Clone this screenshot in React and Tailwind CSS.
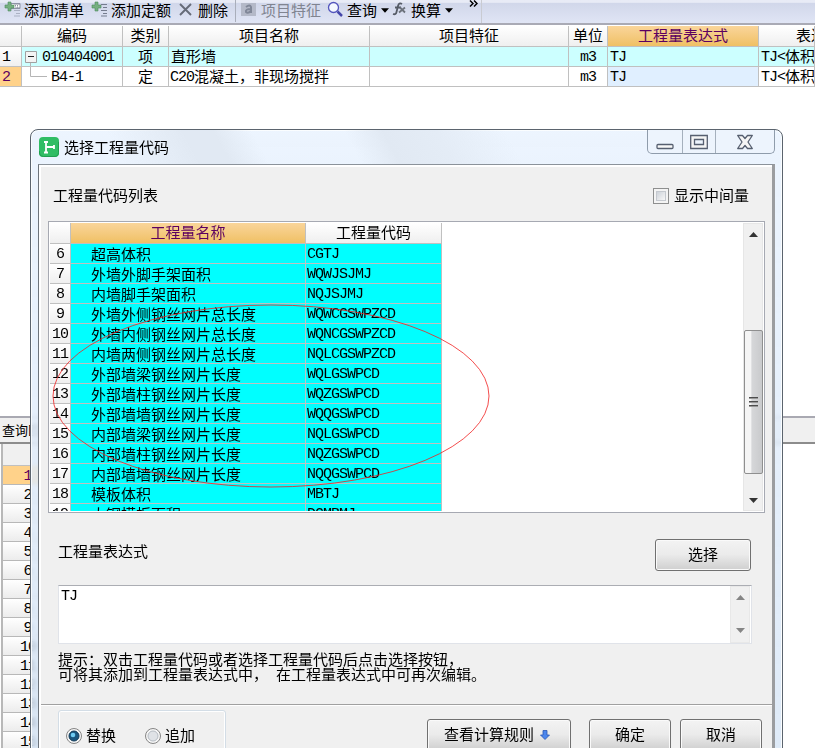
import { clsx } from "clsx";

const codes = [
  [6, "超高体积", "CGTJ"],
  [7, "外墙外脚手架面积", "WQWJSJMJ"],
  [8, "内墙脚手架面积", "NQJSJMJ"],
  [9, "外墙外侧钢丝网片总长度", "WQWCGSWPZCD"],
  [10, "外墙内侧钢丝网片总长度", "WQNCGSWPZCD"],
  [11, "内墙两侧钢丝网片总长度", "NQLCGSWPZCD"],
  [12, "外部墙梁钢丝网片长度", "WQLGSWPCD"],
  [13, "外部墙柱钢丝网片长度", "WQZGSWPCD"],
  [14, "外部墙墙钢丝网片长度", "WQQGSWPCD"],
  [15, "内部墙梁钢丝网片长度", "NQLGSWPCD"],
  [16, "内部墙柱钢丝网片长度", "NQZGSWPCD"],
  [17, "内部墙墙钢丝网片长度", "NQQGSWPCD"],
  [18, "模板体积", "MBTJ"],
  [19, "大钢模板面积", "DGMBMJ"],
];

const mainCols = "grid grid-cols-[22px_101px_46px_201px_199px_39px_151px_1fr]";
const codeCols = "grid grid-cols-[21px_235px_136px]";
const head = "flex items-center justify-center overflow-hidden border-r border-b border-[#c0c0c0] bg-linear-to-b from-white to-[#efefef] pb-[2px] leading-[18px]";
const headOn = "flex items-center justify-center border-r border-b border-[#c0c0c0] bg-linear-to-b from-[#fad59a] to-[#f0c063] pb-[2px] leading-[18px] text-[#5c0060]";
const cell = "flex items-center overflow-hidden border-r border-b border-[#c0c0c0] leading-[18px]";

function Mono({ children, className }) {
  return (
    <span className={clsx("relative top-px font-['Liberation_Mono',monospace] text-[15px] leading-[18px] tracking-[-1px]", className)}>
      {children}
    </span>
  );
}

function Zh({ children }) {
  return <span className="-mt-[2px]">{children}</span>;
}

function AddIcon({ table }) {
  return (
    <svg className="shrink-0" width="18" height="17" viewBox="0 0 18 17">
      {table && <path d="M7 2.5h9v5H7z" fill="#fff" stroke="#8d93a5" />}
      {table && <path d="M9 4.5h6M9 6h6" stroke="#8d93a5" strokeDasharray="1 1" />}
      <path d="M10 3.5h6M12 6.5h4M10 9.5h6M12 12.5h4M10 15h6" stroke="#757c8e" opacity={table ? 0.45 : 1} />
      <path d="M4 1h3v3h3v3H7v3H4V7H1V4h3z" fill="#76af80" stroke="#4d8c5e" strokeWidth=".6" />
    </svg>
  );
}

function Caret({ up, className }) {
  return (
    <svg className={className} width="9" height="5" viewBox="0 0 9 5">
      <path d={up ? "M0 5L4.5 0L9 5z" : "M0 0h9L4.5 5z"} fill="currentColor" />
    </svg>
  );
}

function Toolbar() {
  return (
    <div className="flex h-[25px] items-start border-b-2 border-[#a9aab5] bg-linear-to-b from-[#e8ebf6] from-10% via-[#d1d7ea] via-15% to-[#e0e5f5] leading-[17px]">
      <div className="flex h-[18px] items-center">
        <div className="ml-[4px] w-[20px]"><AddIcon table /></div>
        <span>添加清单</span>
        <div className="ml-[7px] w-[20px]"><AddIcon /></div>
        <span>添加定额</span>
        <svg className="ml-[8px]" width="13" height="15" viewBox="0 0 13 15">
          <path d="M1 2L12 13M12 2L1 13" stroke="#666b78" strokeWidth="1.9" />
        </svg>
        <span className="ml-[6px]">删除</span>
      </div>
      <div className="ml-[7px] h-[22px] w-px bg-[#a9aebb]" />
      <div className="flex h-[18px] items-center">
        <svg className="ml-[5px]" width="15" height="13" viewBox="0 0 15 13">
          <path d="M0 0h15v13H0z" fill="#b4b9c8" />
          <path d="M5 4q4-3 5 0v6M10 6q-6 0-5 3q2 2 5-1" fill="none" stroke="#808798" strokeWidth="2" />
        </svg>
        <span className="ml-[5px] text-[#808490]">项目特征</span>
        <svg className="ml-[6px]" width="17" height="17" viewBox="0 0 17 17">
          <circle cx="6.5" cy="6.5" r="5" fill="#f4f8ff" stroke="#5355bd" strokeWidth="1.3" />
          <path d="M10.5 10.5L15 15" stroke="#4547aa" strokeWidth="2.5" />
        </svg>
        <span className="ml-[3px]">查询</span>
        <Caret className="mt-[2px] ml-[4px] w-[8px]" />
        <svg className="ml-[3px]" width="15" height="14" viewBox="0 0 15 14">
          <path d="M10 2Q7 0 6 4L4.500 10Q4 13 1 12M3 5.500h6" fill="none" stroke="#555b66" strokeWidth="1.8" />
          <path d="M8 5.500l5 5M13 5.500l-6 5" stroke="#6c727c" strokeWidth="1.8" />
        </svg>
        <span className="ml-[4px]">换算</span>
        <Caret className="mt-[2px] ml-[4px] w-[8px]" />
      </div>
      <svg className="ml-[16px]" width="9" height="7" viewBox="0 0 9 7">
        <path d="M1 .5L4 3.500L1 6.500M5 .5L8 3.500L5 6.500" fill="none" stroke="#000" strokeWidth="1.5" />
      </svg>
      <div className="ml-[3px] h-[23px] w-px bg-[#c9cbd2]" />
    </div>
  );
}

function MainTable() {
  return (
    <div className="pt-[1px]">
      <div className={clsx(mainCols, "h-[21px]")}>
        <div className={head} />
        <div className={head}>编码</div>
        <div className={head}>类别</div>
        <div className={head}>项目名称</div>
        <div className={head}>项目特征</div>
        <div className={head}>单位</div>
        <div className={headOn}>工程量表达式</div>
        <div className={clsx(head, "whitespace-nowrap")}>
          <span className="min-w-0 flex-1 pl-[37px]">表达式说明</span>
        </div>
      </div>
      <div className={clsx(mainCols, "h-[20px] bg-[#ccffff]")}>
        <div className={clsx(cell, "bg-linear-to-b from-white to-[#f0f0f0] pl-[2px]")}><Mono>1</Mono></div>
        <div className={clsx(cell, "pl-[3px]")}>
          <svg width="12" height="19" viewBox="0 0 12 19">
            <path d="M.5 4.500h11v11H.5z" fill="#f3f3f3" stroke="#a0a0a0" />
            <path d="M3 9.500h6" stroke="#222" />
            <path d="M5.500 16v3" stroke="#b5b5b5" />
          </svg>
          <Mono className="mt-[1px] ml-[5px]">010404001</Mono>
        </div>
        <div className={clsx(cell, "justify-center")}><Zh>项</Zh></div>
        <div className={clsx(cell, "pl-[2px]")}><Zh>直形墙</Zh></div>
        <div className={cell} />
        <div className={clsx(cell, "justify-center")}><Mono>m3</Mono></div>
        <div className={clsx(cell, "pl-[2px]")}><Mono>TJ</Mono></div>
        <div className={clsx(cell, "pl-[2px] whitespace-nowrap")}><Mono>TJ&lt;</Mono><Zh>体积&gt;</Zh></div>
      </div>
      <div className={clsx(mainCols, "h-[20px]")}>
        <div className={clsx(cell, "bg-[#ffd28a] pl-[2px] text-[#5c0060]")}><Mono>2</Mono></div>
        <div className={clsx(cell, "pl-[8px]")}>
          <svg width="17" height="19" viewBox="0 0 17 19">
            <path d="M.5 0v9.500H17" fill="none" stroke="#b5b5b5" />
          </svg>
          <Mono className="mt-[1px] ml-[4px]">B4-1</Mono>
        </div>
        <div className={clsx(cell, "justify-center")}><Zh>定</Zh></div>
        <div className={clsx(cell, "pl-px whitespace-nowrap")}><Mono>C20</Mono><Zh>混凝土，非现场搅拌</Zh></div>
        <div className={cell} />
        <div className={clsx(cell, "justify-center")}><Mono>m3</Mono></div>
        <div className={clsx(cell, "bg-[#e0efff] pl-[2px]")}><Mono>TJ</Mono></div>
        <div className={clsx(cell, "pl-[2px] whitespace-nowrap")}><Mono>TJ&lt;</Mono><Zh>体积&gt;</Zh></div>
      </div>
    </div>
  );
}

function QueryPanel() {
  return (
    <div className="mt-[329px]">
      <div className="flex h-[28px] items-center border-t-2 border-b-2 border-t-[#a9a9b2] border-b-[#8c8c8c] bg-[#f0f0f0] pl-[2px] text-[13px]">
        查询匹配
      </div>
      <div className="ml-[1px] w-[53px] border-l-2 border-[#b8b8b8]">
        <div className="h-[22px] border-b border-[#c0c0c0] bg-[#f0f0f0]" />
        {Array.from({ length: 15 }, (_, i) => (
          <div
            key={i}
            className={clsx(
              "flex h-[19px] items-center justify-center border-b border-[#b8b8b8] pt-[1px]",
              i === 0 ? "bg-[#ffd28a] text-[#5c0060]" : "bg-linear-to-b from-white to-[#ececec]"
            )}
          >
            <Mono className={i < 9 ? "-ml-[2px]" : "-ml-[1px]"}>{i + 1}</Mono>
          </div>
        ))}
      </div>
    </div>
  );
}

function Button({ children, className }) {
  return (
    <button
      className={clsx(
        "flex h-[32px] items-center justify-center rounded-[3px] border border-[#707070] bg-linear-to-b from-[#f3f3f3] via-[#ebebeb] via-48% to-[#cfcfcf] pb-[2px] shadow-[inset_0_0_0_1px_#fafafa]",
        className
      )}
    >
      {children}
    </button>
  );
}

function TitleBar() {
  return (
    <div className="flex h-[34px] items-start rounded-t-[7px] bg-[linear-gradient(62deg,transparent_12%,#e1e9f3_22%,#e1e9f3_26%,transparent_31%,transparent_43%,#e1e9f3_48%,#e4ecf6_55%,transparent_64%)] pl-[8px]">
      <svg className="mt-[7px]" width="20" height="20" viewBox="0 0 20 20">
        <rect width="20" height="20" rx="4" fill="#30bd64" />
        <path d="M.5 14V16q0 3.500 4 3.500H15q4.500 0 4.500-4V5" fill="none" stroke="#219e50" />
        <path d="M5 5h4M5 15.500h4M7 5v10.500M7 10h8M15 8v4" fill="none" stroke="#fff" strokeWidth="1.8" />
      </svg>
      <span className="mt-[7px] ml-[5px] leading-[20px]">选择工程量代码</span>
      <div className="mr-[7px] ml-auto flex h-[24px] w-[128px] rounded-b-[5px] border border-t-0 border-[#8f9cab] bg-[#edf4fd]">
        <div className="flex w-[35px] items-center justify-center border-r border-[#a5b0bd]">
          <svg width="18" height="24" viewBox="0 0 18 24">
            <rect x="1" y="14.500" width="16" height="4" rx="1" fill="#f8f8f8" stroke="#565f70" strokeWidth="1.3" />
          </svg>
        </div>
        <div className="flex w-[33px] items-center justify-center border-r border-[#a5b0bd]">
          <svg width="18" height="24" viewBox="0 0 18 24">
            <path d="M.7 5.500h16.600v13H.7zM4.500 9.500v5h9v-5z" fill="#f5f5f5" fillRule="evenodd" stroke="#565f70" strokeWidth="1.3" />
          </svg>
        </div>
        <div className="flex flex-1 items-center justify-center">
          <svg width="16" height="22" viewBox="0 0 16 22">
            <path d="M.7 4.500h4.800L8 7.500l2.500-3h4.800L11 11l4.300 6.500h-4.800L8 14.500l-2.500 3H.7L5 11z" fill="#f5f5f5" stroke="#565f70" strokeWidth="1.3" strokeLinejoin="round" />
          </svg>
        </div>
      </div>
    </div>
  );
}

function CodeTable() {
  return (
    <div className="ml-[7px] flex h-[292px] w-[717px] overflow-hidden border border-[#a6a9b2] bg-white p-[1px]">
      <div className="w-[392px] overflow-hidden">
        <div className={clsx(codeCols, "h-[21px]")}>
          <div className={head} />
          <div className={headOn}>工程量名称</div>
          <div className={head}>工程量代码</div>
        </div>
        {codes.map(([n, name, code]) => (
          <div key={n} className={clsx(codeCols, "h-[20px] bg-[#00ffff]")}>
            <div className={clsx(cell, "justify-center bg-linear-to-b from-white to-[#efefef]")}><Mono>{n}</Mono></div>
            <div className={clsx(cell, "pl-[20px] whitespace-nowrap")}>{name}</div>
            <div className={clsx(cell, "pl-[1px]")}><Mono>{code}</Mono></div>
          </div>
        ))}
      </div>
      <div className="ml-auto flex w-[20px] flex-col items-center border border-[#e6e6e6] bg-[#f0f0f0]">
        <Caret up className="mt-[8px] shrink-0 text-[#333]" />
        <div className="mt-[93px] flex h-[144px] w-[19px] shrink-0 flex-col items-center justify-center gap-[2px] rounded-[2px] border border-[#8f8f8f] bg-linear-to-r from-[#f5f5f5] from-35% via-[#d6d7d9] via-40% to-[#c9cacc]">
          <div className="h-[2px] w-[9px] border-t border-b border-t-[#4d4d4d] border-b-[#999]" />
          <div className="h-[2px] w-[9px] border-t border-b border-t-[#4d4d4d] border-b-[#999]" />
          <div className="h-[2px] w-[9px] border-t border-b border-t-[#4d4d4d] border-b-[#999]" />
        </div>
        <Caret className="mt-[24px] shrink-0 text-[#333]" />
      </div>
    </div>
  );
}

function Radio({ checked, label, className }) {
  return (
    <label className={clsx("flex items-center gap-[4px]", className)}>
      <svg width="16" height="16" viewBox="0 0 16 16">
        <circle cx="8" cy="8" r="7.500" fill="#f6f6f6" stroke="#858585" />
        <circle cx="8" cy="8" r="5" fill={checked ? "#19567f" : "#dfe2e6"} stroke={checked ? "#123a58" : "#b5bbc2"} />
        {checked && <circle cx="7" cy="7" r="2.300" fill="#6ecbf2" />}
      </svg>
      <Zh>{label}</Zh>
    </label>
  );
}

function Dialog() {
  return (
    <div className="absolute top-[129px] left-[30px] h-[640px] w-[753px] rounded-t-[8px] border border-[#5b646e] bg-linear-to-b from-[#eaf3fe]/90 to-[#d3e3f5]/75 shadow-[inset_0_0_0_1px_#fafdff] backdrop-blur-[2px]">
      <TitleBar />
      <div className="ml-[7px] h-[600px] w-[737px] border-t border-r-[3px] border-l border-t-[#8b929a] border-r-[#9b9da0] border-l-[#6d747c]">
        <div className="h-full border-t-2 border-l-2 border-white bg-[#f0f0f0]">
          <div className="flex h-[54px] items-center pt-[2px] pl-[12px]">
            <span>工程量代码列表</span>
            <div className="mr-[23px] ml-auto flex items-center gap-[5px]">
              <div className="mt-[2px] h-[16px] w-[16px] border border-[#8e8f8f] bg-[#f4f4f4] p-[2px]">
                <div className="h-full border border-[#c5c9cf] bg-linear-to-br from-[#ced3da] to-[#f7f7f7]" />
              </div>
              显示中间量
            </div>
          </div>
          <CodeTable />
          <div className="mt-[26px] flex h-[32px] pr-[21px] pl-[17px]">
            <span className="mt-[2px]">工程量表达式</span>
            <Button className="ml-auto w-[96px]">选择</Button>
          </div>
          <div className="mt-[14px] ml-[17px] flex h-[59px] w-[694px] border border-[#e0e3e9] border-t-[#abadb3] bg-white">
            <Mono className="mt-[1px] ml-[2px]">TJ</Mono>
            <div className="mr-[1px] ml-auto flex w-[20px] flex-col items-center justify-between border border-[#e8e8e8] bg-[#f0f0f0] pt-[8px] pb-[9px] text-[#858585]">
              <Caret up />
              <Caret />
            </div>
          </div>
          <div className="mt-[7px] ml-[17px] leading-[15px] whitespace-nowrap">
            <div>提示：双击工程量代码或者选择工程量代码后点击选择按钮，</div>
            <div className="[word-spacing:4.6px]">可将其添加到工程量表达式中， 在工程量表达式中可再次编辑。</div>
          </div>
          <div className="mt-[23px] h-[2px] border-t border-b border-t-[#a0a0a0] border-b-white" />
          <div className="flex">
            <div className="mt-[4px] ml-[17px] flex h-[60px] w-[168px] rounded-[3px] border border-[#d3dde6] pt-[15px] pl-[7px] shadow-[inset_0_0_0_1px_#fff]">
              <Radio checked label="替换" className="h-[20px]" />
              <Radio label="追加" className="ml-[29px] h-[20px]" />
            </div>
            <Button className="mt-[13px] ml-[201px] w-[144px] pr-[4px]">
              查看计算规则
              <svg className="mt-[2px] ml-[6px]" width="10" height="10" viewBox="0 0 10 10">
                <path d="M3 .5h4V5h2.500L5 9.500L.5 5H3z" fill="#4c86ec" stroke="#2957b5" strokeWidth=".8" />
              </svg>
            </Button>
            <Button className="mt-[13px] ml-[18px] w-[82px]">确定</Button>
            <Button className="mt-[13px] ml-[9px] w-[82px]">取消</Button>
          </div>
        </div>
      </div>
    </div>
  );
}

export default function App() {
  return (
    <div className="relative h-[748px] w-[815px] overflow-hidden bg-white font-['Noto_Sans_CJK_SC',sans-serif] text-[15px] leading-[20px] text-black">
      <Toolbar />
      <MainTable />
      <QueryPanel />
      <Dialog />
      <svg className="pointer-events-none absolute top-[304px] left-[52px]" width="439" height="185" viewBox="0 0 439 185">
        <ellipse cx="219" cy="92" rx="218" ry="91" fill="none" stroke="#f02020" strokeOpacity=".8" />
      </svg>
    </div>
  );
}
